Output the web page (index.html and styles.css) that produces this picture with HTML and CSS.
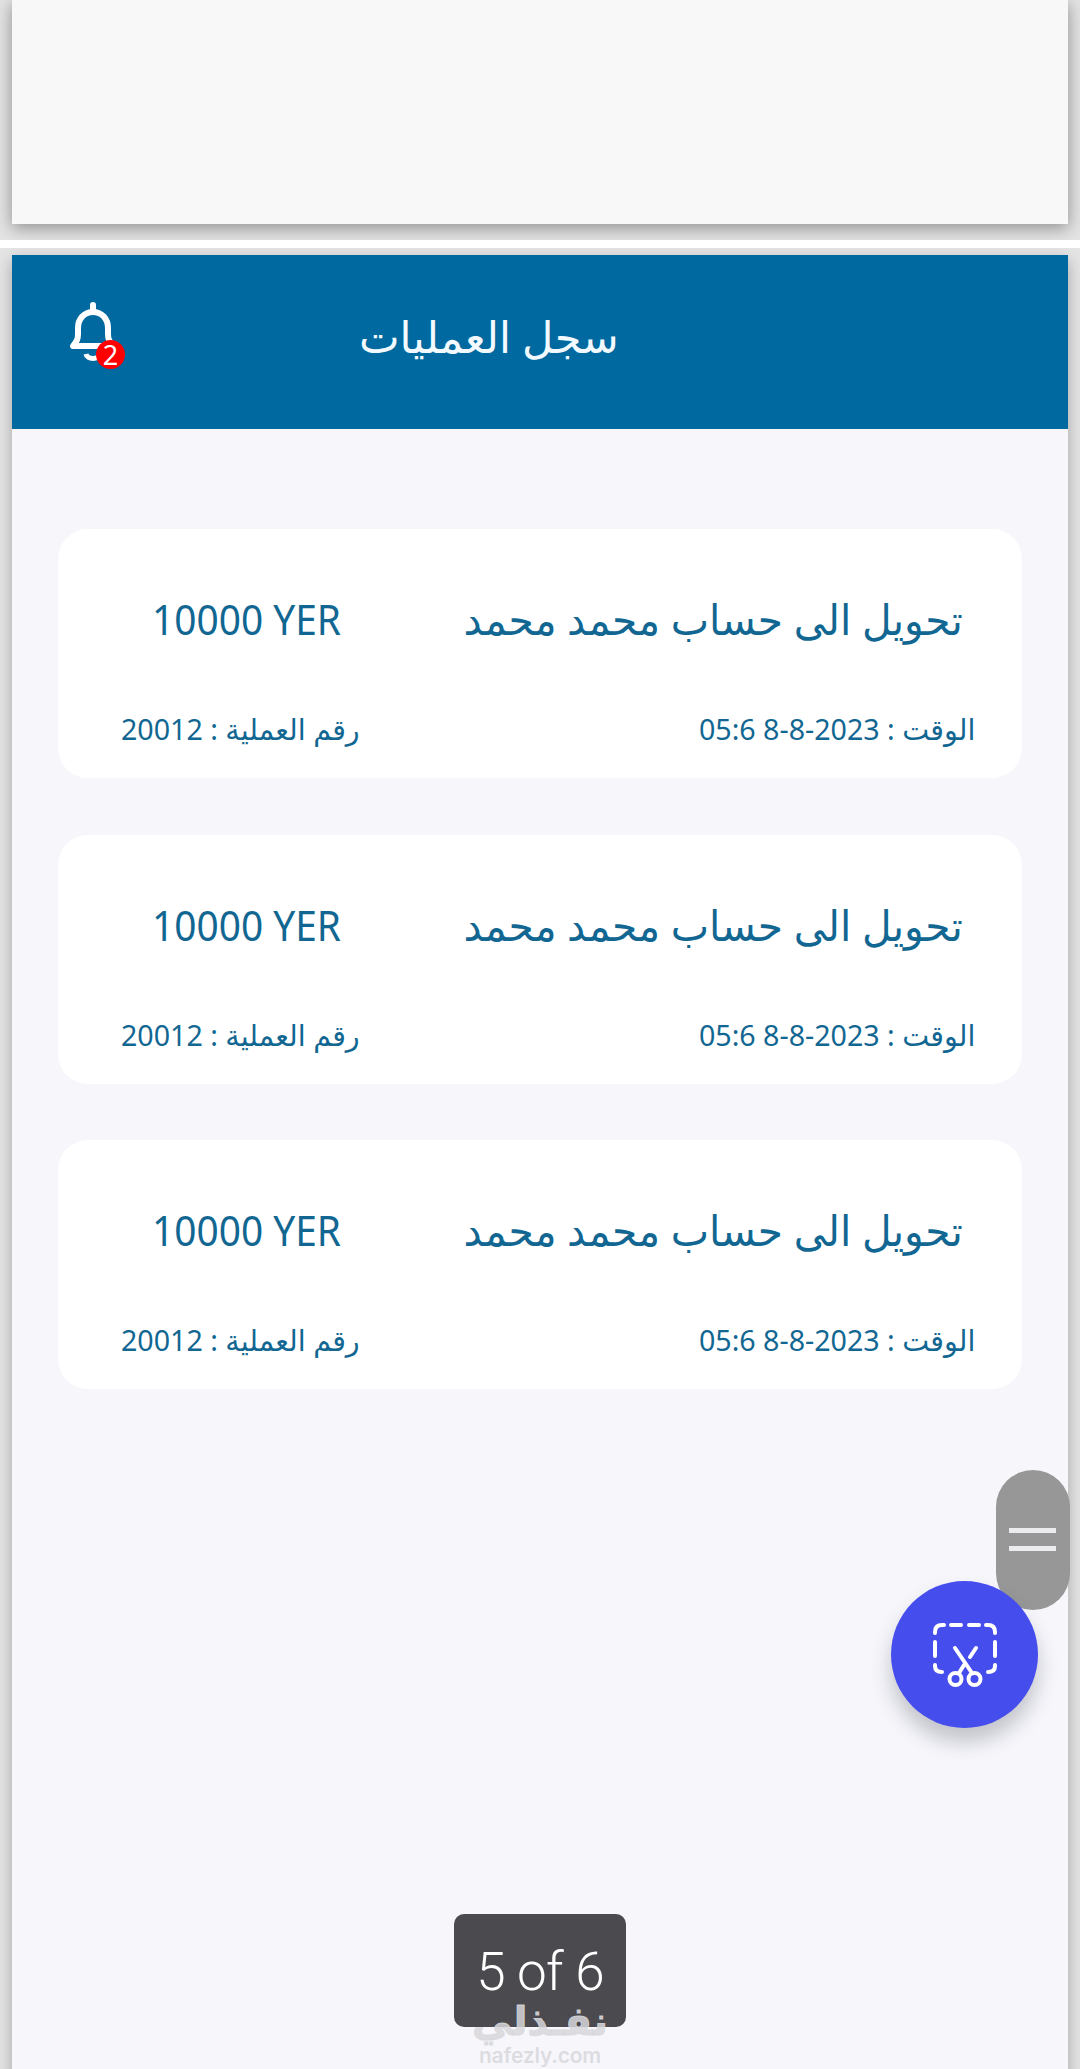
FILE: index.html
```
<!DOCTYPE html>
<html lang="ar">

<head>
    <meta charset="utf-8">
    <title>سجل العمليات</title>
    <link rel="stylesheet" href="styles.css">
</head>

<body>
    <div class="viewer">
        <section class="sheet previous">
            <div class="paper"></div>
        </section>
        <section class="sheet current">
            <div class="paper">
                <header class="header">
                    <div class="bell">
                        <svg width="56" height="72" viewBox="0 0 56 72" fill="none" stroke="#fff" stroke-width="6" stroke-linecap="round" stroke-linejoin="round">
                            <path d="M25 6v7M5 47c4-5 5-7 5-12v-6c0-9 6-16 15-16s15 7 15 16v6c0 5 1 7 5 12z" />
                            <path d="M18 55c1 6 13 6 14 0" stroke-width="5" stroke-linecap="butt" />
                        </svg>
                        <span class="count">2</span>
                    </div>
                    <h1 class="title">سجل العمليات</h1>
                </header>
                <main class="list" dir="rtl">
                    <article class="card">
                        <div class="row">
                            <span class="name">تحويل الى حساب محمد محمد</span>
                            <span class="amount" dir="ltr">10000 YER</span>
                        </div>
                        <div class="row small">
                            <span class="time">الوقت : <bdi dir="ltr">05:6 8-8-2023</bdi></span>
                            <span class="number">رقم العملية : 20012</span>
                        </div>
                    </article>
                    <article class="card">
                        <div class="row">
                            <span class="name">تحويل الى حساب محمد محمد</span>
                            <span class="amount" dir="ltr">10000 YER</span>
                        </div>
                        <div class="row small">
                            <span class="time">الوقت : <bdi dir="ltr">05:6 8-8-2023</bdi></span>
                            <span class="number">رقم العملية : 20012</span>
                        </div>
                    </article>
                    <article class="card">
                        <div class="row">
                            <span class="name">تحويل الى حساب محمد محمد</span>
                            <span class="amount" dir="ltr">10000 YER</span>
                        </div>
                        <div class="row small">
                            <span class="time">الوقت : <bdi dir="ltr">05:6 8-8-2023</bdi></span>
                            <span class="number">رقم العملية : 20012</span>
                        </div>
                    </article>
                </main>
            </div>
        </section>
        <div class="scroller"><i></i><i></i></div>
        <div class="snip">
            <svg width="64" height="66" viewBox="0 0 64 66" fill="none" stroke="#fff" stroke-width="4" stroke-linecap="round">
                <path d="M2 10V9q0-7 7-7h2M18 2h10M36 2h10M53 2h2q7 0 7 7v1M62 19v14M2 19v14M2 42v1q0 6 7 6M62 42v1q0 6-7 6" />
                <path d="M22 25l17 25M43 25l-6 9M31 42l-5 8" />
                <circle cx="22.500" cy="56" r="6" />
                <circle cx="41.500" cy="56" r="6" />
            </svg>
        </div>
        <div class="page-number">5 of 6</div>
        <div class="watermark">
            <b>نفـذلي</b>
            <span>nafezly.com</span>
        </div>
    </div>
</body>

</html>
```
FILE: styles.css
```
html {
    --blue: #00699f;
    --textColor: #126792;
}

* {
    box-sizing: border-box;
}

body {
    margin: 0;
    font-family: "Noto Sans", "DejaVu Sans", sans-serif;
}

.viewer {
    position: relative;
    height: 2069px;
    overflow: hidden;
    background: #fff;
}

.sheet {
    padding: 0 12px;
    overflow: hidden;
    background: #e4e4e5;
}

.previous {
    height: 240px;
}

.previous .paper {
    height: 224px;
    background: #f8f8f8;
    box-shadow: 0 4px 16px rgba(0, 0, 0, 0.38);
}

.current {
    height: 1821px;
    margin-top: 8px;
    padding-top: 7px;
}

.current .paper {
    height: 1840px;
    background: #f6f6fb;
    box-shadow: 0 6px 14px rgba(0, 0, 0, 0.28);
}

.header {
    display: flex;
    height: 174px;
    padding: 44px 0 0 56px;
    background: var(--blue);
}

.bell {
    position: relative;
    width: 56px;
    height: 72px;
}

.count {
    position: absolute;
    left: 28px;
    top: 41px;
    width: 29px;
    height: 29px;
    border-radius: 50%;
    background: #f00;
    color: #fff;
    font-size: 27px;
    line-height: 29px;
    text-align: center;
}

.title {
    width: 256px;
    margin: 7px 0 0 235px;
    color: #f2faff;
    font-size: 44px;
    font-weight: 400;
    line-height: 60px;
    white-space: nowrap;
    transform: scaleX(0.98);
    transform-origin: left;
}

.list {
    display: flex;
    flex-direction: column;
    gap: 56.5px;
    padding: 100px 46px 0;
}

.card {
    height: 249px;
    padding: 60px 59px 0 94px;
    border-radius: 30px;
    background: #fff;
    color: var(--textColor);
}

.row {
    display: flex;
    justify-content: space-between;
    height: 60px;
    font-size: 42px;
    line-height: 60px;
    white-space: nowrap;
}

.name,
.time {
    transform: scaleX(0.97);
    transform-origin: right;
}

.amount,
.number {
    transform: scaleX(0.925);
    transform-origin: left;
}

.small {
    height: 40px;
    margin: 60px -12px 0 -31px;
    font-size: 29px;
    line-height: 40px;
}

.small .time,
.small .number {
    transform: scaleX(0.986);
}

.scroller {
    position: absolute;
    left: 996px;
    top: 1470px;
    display: flex;
    flex-direction: column;
    gap: 13px;
    width: 74px;
    height: 140px;
    padding: 58px 14px 0 13px;
    border-radius: 37px;
    background: #979797;
}

.scroller i {
    height: 5px;
    background: #ececee;
}

.snip {
    position: absolute;
    left: 891px;
    top: 1581px;
    display: flex;
    width: 147px;
    height: 147px;
    padding: 42px 0 0 42px;
    border-radius: 50%;
    background: #464ded;
    box-shadow: 0 14px 20px rgba(60, 70, 80, 0.28);
}

.page-number {
    position: absolute;
    left: 454px;
    top: 1914px;
    width: 172px;
    height: 113px;
    border-radius: 10px;
    background: #4b4a4f;
    color: #fff;
    font: 300 53px/117px Roboto, sans-serif;
    letter-spacing: -0.7px;
    text-align: center;
}

.watermark {
    position: absolute;
    left: 470px;
    top: 1998px;
    display: flex;
    flex-direction: column;
    align-items: center;
    width: 140px;
    color: rgba(216, 216, 220, 0.85);
    white-space: nowrap;
}

.watermark b {
    height: 46px;
    font: 700 40px/46px "DejaVu Sans", sans-serif;
    -webkit-text-stroke: 1px rgba(216, 216, 220, 0.85);
}

.watermark span {
    font: 600 21px/24px Inter, sans-serif;
    letter-spacing: -0.2px;
}
```
